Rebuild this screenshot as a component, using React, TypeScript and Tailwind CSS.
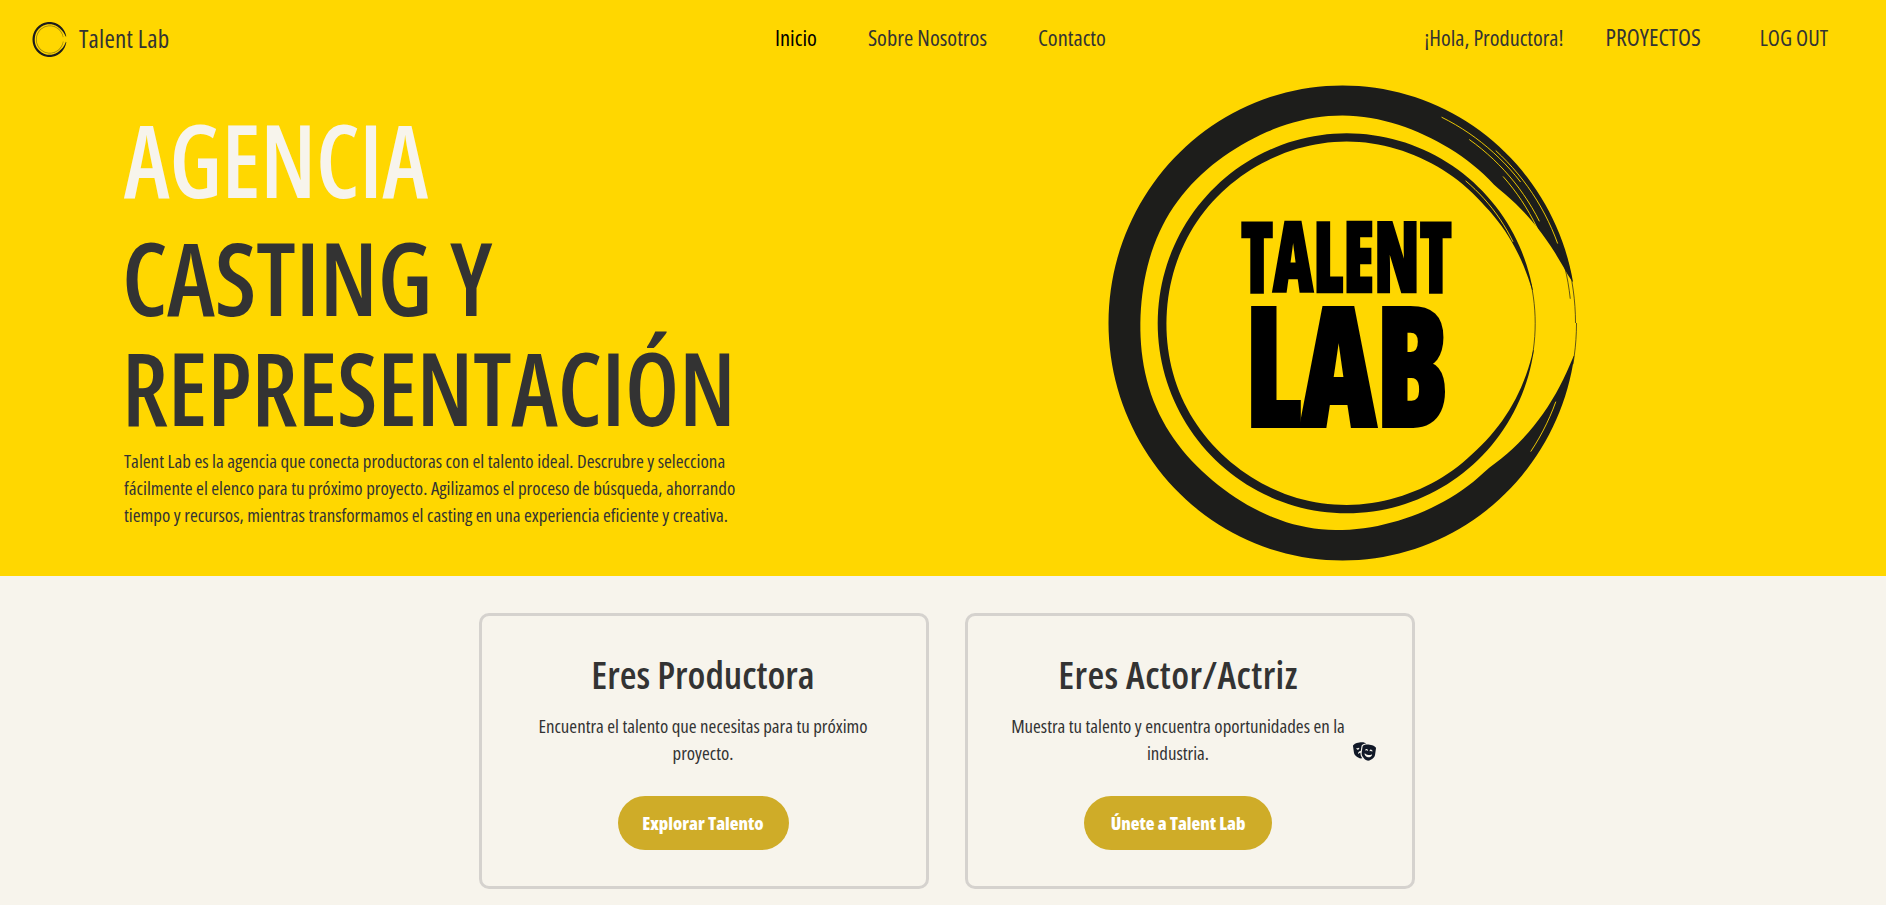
import { FaMasksTheater } from 'react-icons/fa6';

// brush ring: thickness fades out on the right side, where the stroke starts and ends
const ringPath = (cx: number, cy: number, rx: number, ry: number, tmax: number) => {
  const thick = (a: number) => {
    if (a < 46) return 0.5 + (tmax - 0.5) * Math.pow((a - 8) / 38, 0.9);
    if (a > 318) return 0.5 + (tmax - 0.5) * Math.pow((350 - a) / 32, 0.8);
    return tmax + Math.sin(a / 9) * tmax * 0.03;
  };
  const outer: string[] = [];
  const inner: string[] = [];
  for (let a = 8; a <= 350; a += 2) {
    const r = (a * Math.PI) / 180;
    const t = thick(a);
    outer.push(`${(cx + rx * Math.cos(r)).toFixed(2)} ${(cy + ry * Math.sin(r)).toFixed(2)}`);
    inner.unshift(`${(cx + (rx - t) * Math.cos(r)).toFixed(2)} ${(cy + (ry - t) * Math.sin(r)).toFixed(2)}`);
  }
  return `M${outer.join('L')}L${inner.join('L')}Z`;
};

const arcPath = (cx: number, cy: number, rx: number, ry: number, from: number, to: number) => {
  const pts: string[] = [];
  for (let a = from; a <= to; a += 2) {
    const r = (a * Math.PI) / 180;
    pts.push(`${(cx + rx * Math.cos(r)).toFixed(2)} ${(cy + ry * Math.sin(r)).toFixed(2)}`);
  }
  return `M${pts.join('L')}`;
};

const BigLogo = () => (
  <svg viewBox="1090 79 500 490" className="w-[500px] h-[490px] shrink-0">
    <path d={ringPath(1342.5, 324, 234, 237.5, 31)} fill="#1d1d1b" />
    <path d={ringPath(1346.7, 324.3, 189, 190, 8.5)} fill="#1d1d1b" />
    <g fill="none" stroke="#ffd700" strokeWidth="0.9">
      <path d={arcPath(1342.5, 324, 226, 229, 296, 322)} />
      <path d={arcPath(1342.5, 324, 221, 224, 305, 334)} />
      <path d={arcPath(1342.5, 324, 229, 232, 312, 340)} />
      <path d={arcPath(1342.5, 324, 216, 219, 318, 338)} />
      <path d={arcPath(1346.7, 324.3, 185, 186, 310, 335)} />
      <path d={arcPath(1342.5, 324, 227, 230, 20, 34)} />
    </g>
    <g fill="none" stroke="#1d1d1b" strokeWidth="0.7">
      <path d={arcPath(1342.5, 324, 233, 236.5, 344, 360)} />
      <path d={arcPath(1342.5, 324, 234, 237.5, 0, 10)} />
      <path d={arcPath(1342.5, 324, 229, 232, 340, 354)} />
      <path d={arcPath(1346.7, 324.3, 188.5, 189.5, 348, 360)} />
      <path d={arcPath(1346.7, 324.3, 188.5, 189.5, 0, 10)} />
    </g>
    <text x="1241" y="293" fontSize="97" fontWeight="800" textLength="211" lengthAdjust="spacingAndGlyphs" fill="#000" stroke="#000" strokeWidth="2.5">TALENT</text>
    <text x="1245" y="427" fontSize="165" fontWeight="800" textLength="204" lengthAdjust="spacingAndGlyphs" fill="#000" stroke="#000" strokeWidth="4">LAB</text>
  </svg>
);

const SmallLogo = () => (
  <svg viewBox="0 0 35 37" className="w-[35px] h-[37px] shrink-0">
    <path d={ringPath(17.5, 18.5, 17, 17.5, 2.2)} fill="#1d1d1b" />
    <path d={ringPath(17.8, 18.5, 13.8, 14, 0.7)} fill="#1d1d1b" fillOpacity="0.5" />
  </svg>
);

const cards = [
  { title: 'Eres Productora', text: 'Encuentra el talento que necesitas para tu próximo proyecto.', cta: 'Explorar Talento', box: 'pr-[2px]', head: 'tracking-normal', btn: 'w-[171px]', para: 'w-[340px]', mask: false },
  { title: 'Eres Actor/Actriz', text: 'Muestra tu talento y encuentra oportunidades en la industria.', cta: 'Únete a Talent Lab', box: 'pr-[24px]', head: 'tracking-[0.4px]', btn: 'w-[188px]', para: 'w-[345px]', mask: true },
];

export default function App() {
  return (
    <div className="min-h-screen bg-[#f7f4ec] font-['Open_Sans',sans-serif] [font-stretch:75%] text-[#333333]">
      <div className="bg-[#ffd700] h-[576px]">
        <header className="h-[78px] flex items-center pl-8 pr-[58px]">
          <div className="w-[743px] flex items-center gap-3">
            <SmallLogo />
            <span className="text-[25px] tracking-[0.2px]">Talent Lab</span>
          </div>
          <nav className="flex items-center gap-[51px] text-[22.4px] pb-[2px]">
            <a className="text-black">Inicio</a>
            <a>Sobre Nosotros</a>
            <a>Contacto</a>
          </nav>
          <div className="ml-auto flex items-center text-[22.2px] pb-[2px]">
            <span className="mr-[42px]">¡Hola, Productora!</span>
            <a className="mr-[59px] text-[23.8px]">PROYECTOS</a>
            <a>LOG OUT</a>
          </div>
        </header>

        <section className="flex pl-[124px]">
          <div className="w-[966px] shrink-0">
            <h1 className="mt-[20px] text-[102px] leading-[122px] font-semibold text-[#f7f4ec] scale-x-[0.92] origin-left">AGENCIA</h1>
            <h2 className="mt-[2px] -ml-[2px] text-[102px] leading-[110px] font-semibold">
              <span className="block scale-x-[0.96] origin-left">CASTING Y</span>
              <span className="block scale-x-[0.934] origin-left whitespace-nowrap">REPRESENTACIÓN</span>
            </h2>
            <p className="mt-[6px] w-[630px] text-[18.95px] leading-[27px]">
              Talent Lab es la agencia que conecta productoras con el talento ideal. Descrubre y selecciona fácilmente el elenco para tu próximo proyecto. Agilizamos el proceso de búsqueda, ahorrando tiempo y recursos, mientras transformamos el casting en una experiencia eficiente y creativa.
            </p>
          </div>
          <BigLogo />
        </section>
      </div>

      <section className="flex justify-center gap-[36px] pt-[37px] pl-2">
        {cards.map(c => (
          <div key={c.title} className={`${c.box} relative w-[450px] h-[276px] border-[3px] border-[#d5d2ce] rounded-[10px] flex flex-col items-center pt-[33px]`}>
            <h3 className={`${c.head} text-[38.5px] leading-[50px] font-semibold`}>{c.title}</h3>
            <p className={`${c.para} mt-[14px] text-center text-[18.85px] leading-[27px]`}>{c.text}</p>
            <button className={`${c.btn} mt-[29px] h-[54px] rounded-full bg-[#cfac28] text-white font-extrabold text-[18px]`}>{c.cta}</button>
            {c.mask && <FaMasksTheater className="absolute left-[385px] top-[124px] text-[23px] text-[#111827]" />}
          </div>
        ))}
      </section>
    </div>
  );
}
